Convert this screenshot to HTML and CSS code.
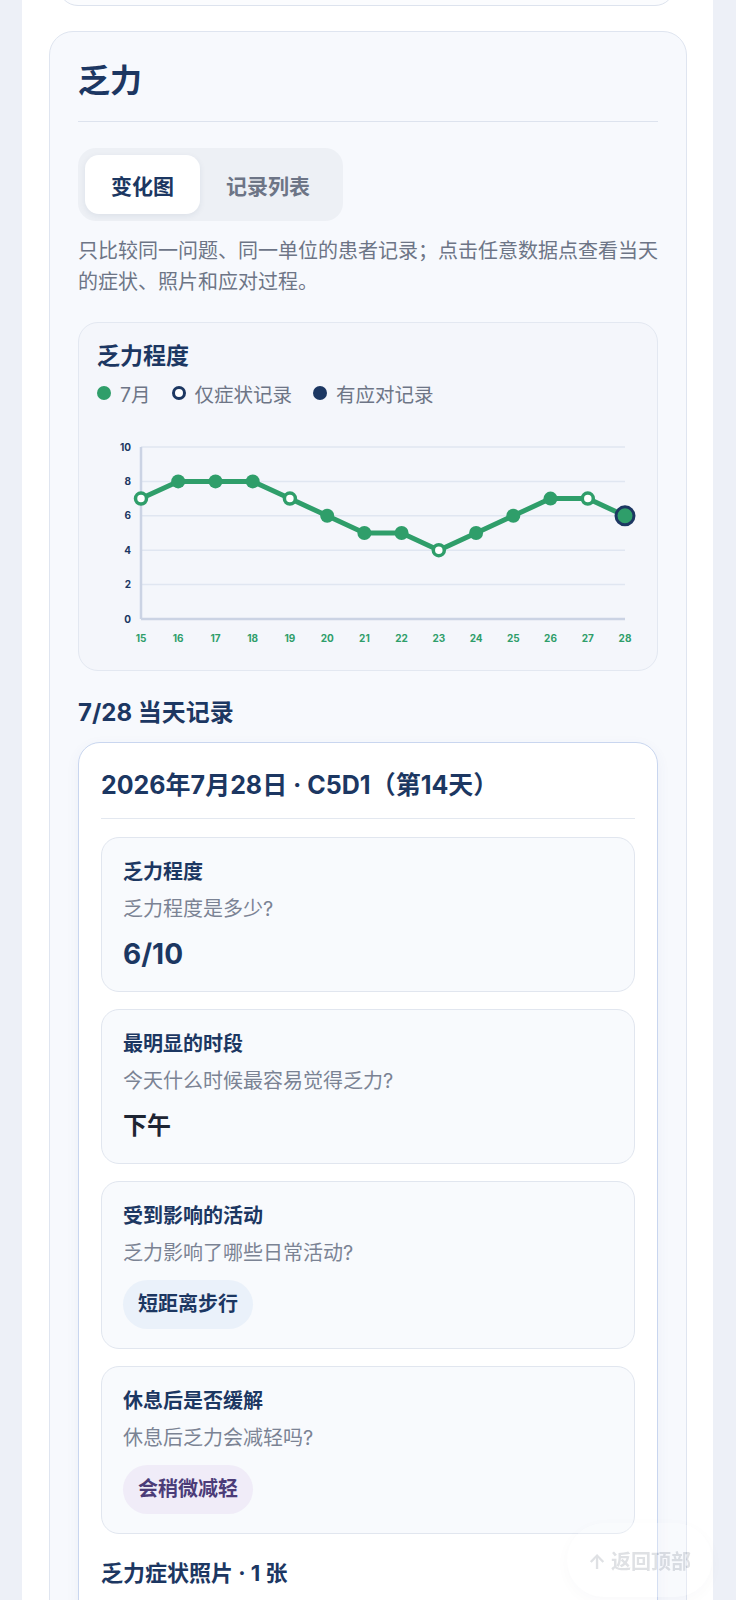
FILE: index.html
```html
<!DOCTYPE html>
<html lang="zh-CN">
<head>
<meta charset="UTF-8">
<meta name="viewport" content="width=device-width, initial-scale=1.0">
<title>乏力 - 变化图</title>
<link rel="stylesheet" href="styles.css">
</head>
<body>

<div class="page">
    <div class="prev-card"></div>

    <div class="symptom-card">
        <h2 class="symptom-title">乏力</h2>

        <div class="tabs">
            <button class="tab active">变化图</button>
            <button class="tab">记录列表</button>
        </div>

        <p class="hint">只比较同一问题、同一单位的患者记录；点击任意数据点查看当天的症状、照片和应对过程。</p>

        <div class="chart-card">
            <h3 class="chart-title">乏力程度</h3>
            <div class="legend">
                <span class="legend-item"><i class="dot dot-green"></i>7月</span>
                <span class="legend-item"><i class="dot dot-hollow"></i>仅症状记录</span>
                <span class="legend-item"><i class="dot dot-navy"></i>有应对记录</span>
            </div>

            <svg class="chart" width="542" height="240" viewBox="0 0 542 240">
                <!-- grid -->
                <g class="grid">
                    <line x1="44" y1="34" x2="528" y2="34"/>
                    <line x1="44" y1="68.4" x2="528" y2="68.4"/>
                    <line x1="44" y1="102.8" x2="528" y2="102.8"/>
                    <line x1="44" y1="137.2" x2="528" y2="137.2"/>
                    <line x1="44" y1="171.6" x2="528" y2="171.6"/>
                </g>
                <g class="axis">
                    <line x1="44" y1="34" x2="44" y2="206"/>
                    <line x1="44" y1="206" x2="528" y2="206"/>
                </g>
                <g class="y-labels">
                    <text x="34" y="37.5">10</text>
                    <text x="34" y="71.9">8</text>
                    <text x="34" y="106.3">6</text>
                    <text x="34" y="140.7">4</text>
                    <text x="34" y="175.1">2</text>
                    <text x="34" y="209.5">0</text>
                </g>
                <g class="x-labels">
                    <text x="44" y="229">15</text>
                    <text x="81.2" y="229">16</text>
                    <text x="118.5" y="229">17</text>
                    <text x="155.7" y="229">18</text>
                    <text x="192.9" y="229">19</text>
                    <text x="230.2" y="229">20</text>
                    <text x="267.4" y="229">21</text>
                    <text x="304.6" y="229">22</text>
                    <text x="341.8" y="229">23</text>
                    <text x="379.1" y="229">24</text>
                    <text x="416.3" y="229">25</text>
                    <text x="453.5" y="229">26</text>
                    <text x="490.8" y="229">27</text>
                    <text x="528" y="229">28</text>
                </g>

                <polyline class="series" points="44,85.6 81.2,68.4 118.5,68.4 155.7,68.4 192.9,85.6 230.2,102.8 267.4,120 304.6,120 341.8,137.2 379.1,120 416.3,102.8 453.5,85.6 490.8,85.6 528,102.8"/>

                <!-- filled = 有应对, hollow = 仅症状 -->
                <circle class="pt-hollow" cx="44" cy="85.6" r="5.5"/>
                <circle class="pt" cx="81.2" cy="68.4" r="7"/>
                <circle class="pt" cx="118.5" cy="68.4" r="7"/>
                <circle class="pt" cx="155.7" cy="68.4" r="7"/>
                <circle class="pt-hollow" cx="192.9" cy="85.6" r="5.5"/>
                <circle class="pt" cx="230.2" cy="102.8" r="7"/>
                <circle class="pt" cx="267.4" cy="120" r="7"/>
                <circle class="pt" cx="304.6" cy="120" r="7"/>
                <circle class="pt-hollow" cx="341.8" cy="137.2" r="5.5"/>
                <circle class="pt" cx="379.1" cy="120" r="7"/>
                <circle class="pt" cx="416.3" cy="102.8" r="7"/>
                <circle class="pt" cx="453.5" cy="85.6" r="7"/>
                <circle class="pt-hollow" cx="490.8" cy="85.6" r="5.5"/>
                <circle class="pt-selected" cx="528" cy="102.8" r="9"/>
            </svg>
        </div>

        <h3 class="day-heading">7/28 当天记录</h3>

        <div class="day-card">
            <h4 class="day-title">2026年7月28日 · C5D1（第14天）</h4>

            <div class="answer">
                <div class="answer-label">乏力程度</div>
                <div class="answer-question">乏力程度是多少?</div>
                <div class="answer-score">6/10</div>
            </div>

            <div class="answer">
                <div class="answer-label">最明显的时段</div>
                <div class="answer-question">今天什么时候最容易觉得乏力?</div>
                <div class="answer-text">下午</div>
            </div>

            <div class="answer">
                <div class="answer-label">受到影响的活动</div>
                <div class="answer-question">乏力影响了哪些日常活动?</div>
                <span class="chip chip-blue">短距离步行</span>
            </div>

            <div class="answer">
                <div class="answer-label">休息后是否缓解</div>
                <div class="answer-question">休息后乏力会减轻吗?</div>
                <span class="chip chip-purple">会稍微减轻</span>
            </div>

            <h4 class="photo-title">乏力症状照片 · 1 张</h4>
            <div class="photo-box"></div>
        </div>
    </div>
</div>

<button class="back-top">↑ 返回顶部</button>

</body>
</html>
```

FILE: styles.css
```css
html, body {
    margin: 0;
    padding: 0;
    height: 1600px;
    overflow: hidden;
}

body {
    font-family: "Inter", "Noto Sans CJK SC", sans-serif;
    background-color: #edf0f7;
    color: #1c3762;
}

.page {
    width: 691px;
    margin-left: 22px;
    height: 1600px;
    background: #fff;
    overflow: hidden;
}

.prev-card {
    height: 30px;
    margin: -26px 38px 0 36px;
    border: 1px solid #dde3ee;
    border-radius: 0 0 20px 20px;
    background: #fbfcfe;
}

.symptom-card {
    margin: 25px 26px 0 27px;
    padding: 28px 28px 40px;
    background: #f7f9fd;
    border: 1px solid #dfe5f0;
    border-radius: 24px;
}

.symptom-title {
    margin: 0;
    font-size: 32px;
    line-height: 42px;
    font-weight: 700;
    padding-bottom: 19px;
    border-bottom: 1px solid #dde3ee;
}

.tabs {
    display: inline-flex;
    margin-top: 26px;
    padding: 7px;
    background: #edf0f5;
    border-radius: 18px;
}

.tab {
    height: 59px;
    padding: 0 26px;
    border: none;
    background: transparent;
    border-radius: 14px;
    font-family: inherit;
    font-size: 21px;
    font-weight: 700;
    color: #6d7586;
}

.tab.active {
    background: #fff;
    color: #1c3762;
    box-shadow: 0 2px 6px rgba(30, 50, 90, 0.08);
}

.hint {
    margin: 15px 0 0;
    font-size: 20px;
    line-height: 31px;
    color: #6d7586;
}

.chart-card {
    margin-top: 24px;
    padding: 18px 18px 17px;
    background: #f4f6fb;
    border: 1px solid #e3e8f1;
    border-radius: 20px;
}

.chart-title {
    margin: 0;
    font-size: 23px;
    line-height: 30px;
    font-weight: 700;
}

.legend {
    display: flex;
    align-items: center;
    margin-top: 8px;
    height: 28px;
    font-size: 19.5px;
    color: #6d7586;
}

.legend-item {
    display: flex;
    align-items: center;
    margin-right: 21px;
}

.dot {
    display: inline-block;
    width: 14px;
    height: 14px;
    border-radius: 50%;
    margin-right: 9px;
    box-sizing: border-box;
}

.dot-green { background: #2f9e6a; }
.dot-hollow { border: 3px solid #1c3762; background: #fff; }
.dot-navy { background: #1c3762; }

.chart {
    display: block;
    margin-top: 6px;
}

.grid line {
    stroke: #e0e6f1;
    stroke-width: 1.5;
}

.axis line {
    stroke: #cbd3e4;
    stroke-width: 2.5;
}

.y-labels text {
    font-size: 10px;
    font-weight: 700;
    fill: #1c3762;
    text-anchor: end;
}

.x-labels text {
    font-size: 10px;
    font-weight: 700;
    fill: #2f9e6a;
    text-anchor: middle;
}

.series {
    fill: none;
    stroke: #2f9e6a;
    stroke-width: 5;
    stroke-linejoin: round;
}

.pt { fill: #2f9e6a; }
.pt-hollow { fill: #fff; stroke: #2f9e6a; stroke-width: 3.5; }
.pt-selected { fill: #2f9e6a; stroke: #1c3762; stroke-width: 3; }

.day-heading {
    margin: 26px 0 0;
    font-size: 24px;
    line-height: 32px;
    font-weight: 700;
}

.day-card {
    margin-top: 13px;
    padding: 22px 22px 0;
    background: #fff;
    border: 1px solid #c9d6ef;
    border-radius: 22px;
    box-shadow: 0 4px 14px rgba(60, 90, 160, 0.06);
}

.day-title {
    margin: 0;
    font-size: 25px;
    line-height: 40px;
    font-weight: 700;
    padding-bottom: 13px;
    border-bottom: 1px solid #e3e8f0;
}

.answer {
    margin-top: 18px;
    padding: 21px 21px 19px;
    background: #f8fafd;
    border: 1px solid #e1e6ef;
    border-radius: 18px;
}

.answer + .answer {
    margin-top: 17px;
}

.answer-label {
    font-size: 20px;
    line-height: 26px;
    font-weight: 700;
}

.answer-question {
    margin-top: 10px;
    font-size: 20px;
    line-height: 28px;
    color: #7b8394;
}

.answer-score {
    margin-top: 13px;
    font-size: 28px;
    line-height: 36px;
    font-weight: 700;
}

.answer-text {
    margin-top: 13px;
    font-size: 24px;
    line-height: 36px;
    font-weight: 600;
    color: #1e2533;
}

.chip {
    display: inline-block;
    margin-top: 13px;
    padding: 0 15px;
    height: 49px;
    line-height: 49px;
    border-radius: 25px;
    font-size: 20px;
    font-weight: 700;
}

.chip-blue {
    background: #eaf1fa;
    color: #1c3762;
}

.chip-purple {
    background: #f0ecf8;
    color: #4b3c78;
}

.photo-title {
    margin: 25px 0 0;
    font-size: 22px;
    line-height: 28px;
    font-weight: 700;
}

.photo-box {
    height: 200px;
}

.back-top {
    position: fixed;
    right: 24px;
    bottom: 3px;
    width: 145px;
    height: 74px;
    border: none;
    border-radius: 37px;
    background: #fff;
    box-shadow: 0 4px 16px rgba(30, 50, 90, 0.12);
    font-family: inherit;
    font-size: 20px;
    font-weight: 700;
    color: #6d7586;
    opacity: 0.22;
}
```
